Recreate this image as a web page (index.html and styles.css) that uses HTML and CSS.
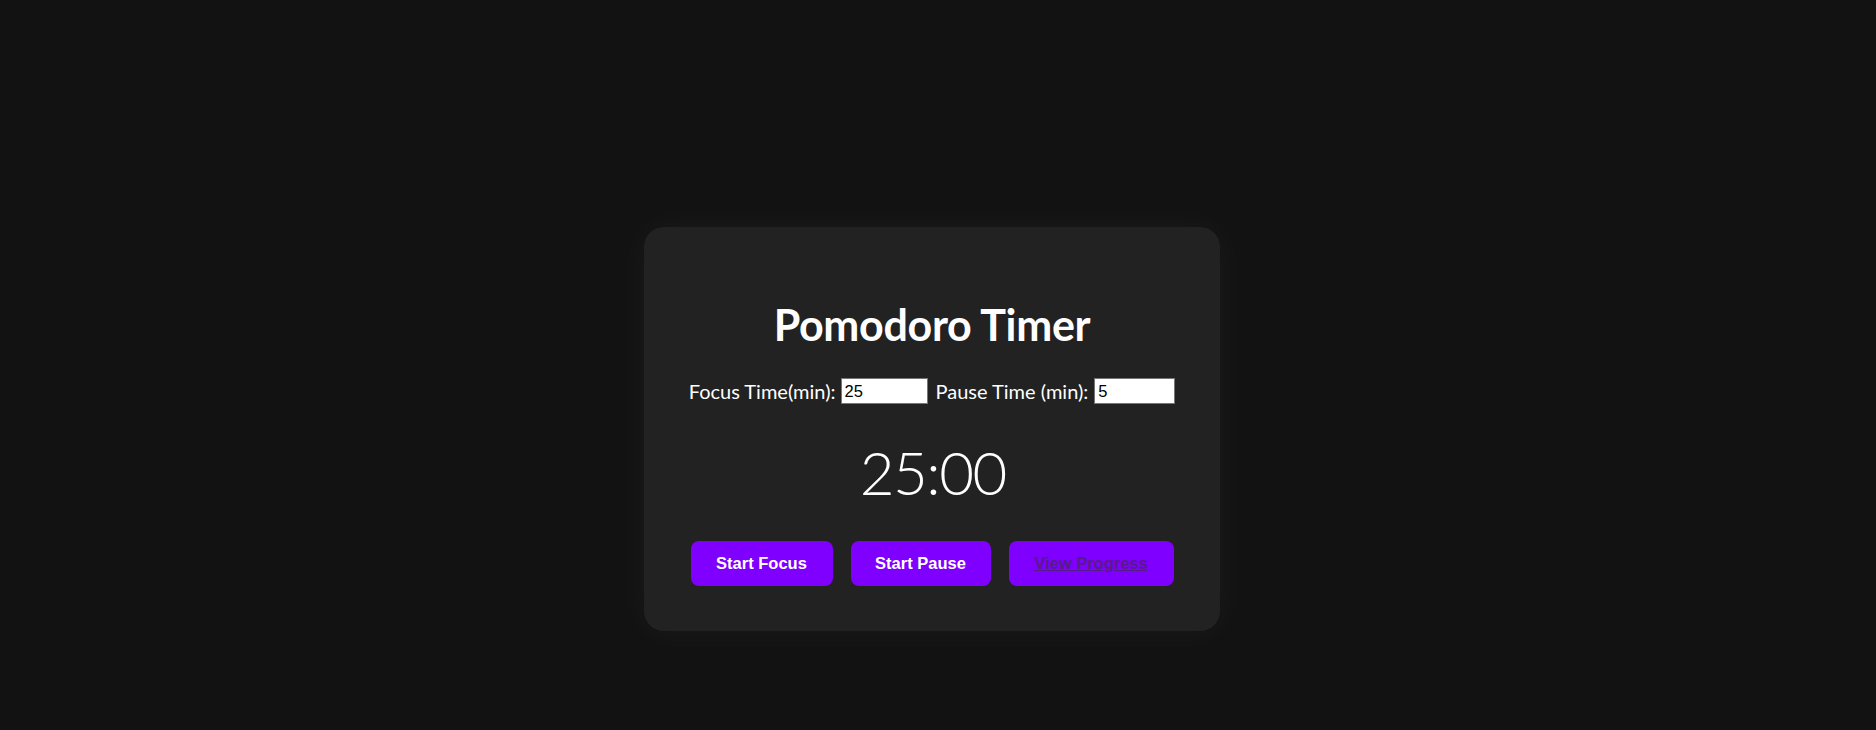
FILE: index.html
```html
<!DOCTYPE html>
<html lang="en">
<head>
<meta charset="utf-8">
<title>Pomodoro Timer</title>
<link rel="stylesheet" href="styles.css">
</head>
<body>
  <main class="card">
    <h1 class="title">Pomodoro Timer</h1>
    <div class="settings">
      <label class="label" for="focus">Focus Time(min):</label>
      <input class="input input-focus" id="focus" type="text" value="25">
      <label class="label label-pause" for="pause">Pause Time (min):</label>
      <input class="input input-pause" id="pause" type="text" value="5">
    </div>
    <div class="timer">25:00</div>
    <div class="actions">
      <button class="btn btn-focus">Start Focus</button>
      <button class="btn btn-pause">Start Pause</button>
      <button class="btn btn-progress"><a class="link" href="#progress">View Progress</a></button>
    </div>
  </main>
</body>
</html>
```

FILE: styles.css
```css
html, body {
  margin: 0;
  height: 100%;
}

body {
  background: #121212;
  display: flex;
  justify-content: center;
  align-items: flex-start;
  padding: 227px 12px 0 0;
  box-sizing: border-box;
  font-family: Lato, "Open Sans", sans-serif;
  color: #ffffff;
}

.card {
  width: 576px;
  height: 404px;
  box-sizing: border-box;
  background: #222222;
  border-radius: 20px;
  box-shadow: 0 0 36px rgba(255, 255, 255, 0.045);
  padding: 73px 20px 45px;
  display: flex;
  flex-direction: column;
  align-items: center;
}

.title {
  margin: 0;
  font-size: 43px;
  line-height: 50px;
  font-weight: 700;
  color: #ffffff;
  letter-spacing: -0.3px;
}

.settings {
  margin-top: 28px;
  height: 26px;
  display: flex;
  align-items: center;
}

.label {
  font-size: 20px;
  line-height: 26px;
  margin-right: 5px;
}

.label-pause {
  margin-left: 8px;
  margin-right: 6px;
}

.input {
  box-sizing: border-box;
  height: 26px;
  border: 1px solid #767676;
  background: #ffffff;
  color: #000000;
  padding: 0 3px;
  font-family: "Liberation Sans", Arial, sans-serif;
  font-size: 16.5px;
  outline: none;
  border-radius: 0;
}

.input-focus {
  width: 87px;
}

.input-pause {
  width: 81px;
}

.timer {
  margin-top: 33px;
  font-size: 60px;
  line-height: 70px;
  font-weight: 300;
  letter-spacing: -1.5px;
  padding-left: 1.5px;
}

.actions {
  margin-top: 34px;
  display: flex;
  gap: 18px;
}

.btn {
  height: 45px;
  box-sizing: border-box;
  border: none;
  border-radius: 8px;
  background: #8000ff;
  color: #ffffff;
  font-family: "Liberation Sans", Arial, sans-serif;
  font-weight: 700;
  font-size: 16.5px;
  line-height: 19px;
  padding: 0;
  white-space: nowrap;
  cursor: pointer;
}

.btn-focus {
  width: 142px;
}

.btn-pause {
  width: 140px;
}

.btn-progress {
  width: 165px;
}

.link {
  color: #551a8b;
  text-decoration: underline;
}
```
